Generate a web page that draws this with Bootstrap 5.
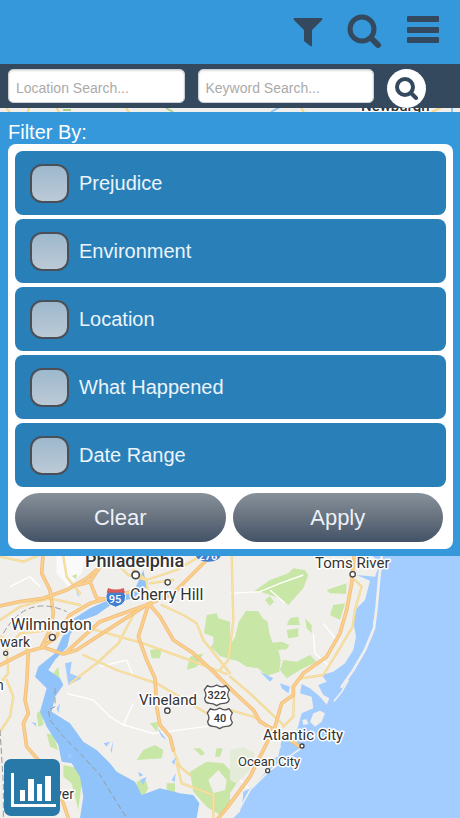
<!DOCTYPE html>
<html lang="en">
<head>
<meta charset="utf-8">
<meta name="viewport" content="width=device-width, initial-scale=1">
<title>Map filters</title>
<link href="https://cdn.jsdelivr.net/npm/bootstrap@5.3.0/dist/css/bootstrap.min.css" rel="stylesheet">
<style>
body { font-family: "Liberation Sans", Arial, sans-serif; background: #f1efec; }
.map-page { overflow: hidden; }
.map-canvas { z-index: 0; }
.map-canvas text { font-family: Roboto, sans-serif; fill: #333; stroke: #fff; stroke-width: 3px; paint-order: stroke; stroke-linejoin: round; }
.map-canvas .shield-text { stroke: none; font-weight: 500; }
.map-canvas .shield-light { fill: #fff; }
.layer { z-index: 1; }
.top-bar { background: #3498db; height: 64px; gap: 24px; padding: 0 21px; }
.icon-btn { color: #34495e; line-height: 0; }
.search-bar { background: #34495e; height: 44px; padding: 0 34px 0 8px; }
.search-bar .form-control { height: 34px; font-size: 14px; padding: 3px 7px 0; border: 1px solid #ccd0d4; border-radius: 5px; box-shadow: inset 0 1px 2px #ddd; margin-right: 13px; min-width: 0; }
.search-bar .form-control::placeholder { color: #aaa; }
.go-btn { width: 39px; height: 39px; background: #fff; color: #34495e; line-height: 0; margin-top: 4px; flex: none; }
.filter-panel { background: #3498db; margin-top: 4px; padding: 8px 7px 7px 8px; }
.filter-title { font-size: 20px; line-height: 24px; color: #fff; }
.filter-box { border-radius: 8px; padding: 7px; }
.filter-list { gap: 4px; }
.filter-item { height: 64px; border-radius: 8px; background: #2980b9; color: #ecf4fa; font-size: 20px; gap: 10px; padding: 0 15px; cursor: pointer; }
.filter-item .form-check-input { width: 39px; height: 39px; margin: 0; border: 2px solid #4b4f57; border-radius: 12px; background: linear-gradient(#a9c1d4, #becbd6); flex: none; }
.filter-item .form-check-input { background: linear-gradient(#9db8cd, #bccad6); }
.filter-item .form-check-input:checked { background: linear-gradient(#5d7388, #34495e); }
.filter-actions { gap: 7px; margin: 6px 3px 0 0; }
.filter-actions .btn { height: 49px; border: 0; font-size: 22px; color: #ecf0f8; background: linear-gradient(#87919a, #68727f 50%, #435268); }
.chart-btn { left: 4px; bottom: 2px; width: 56px; height: 57px; border-radius: 7px; background: #2878a8; line-height: 0; z-index: 2; }
</style>
</head>
<body>
<main class="map-page position-relative min-vh-100">
<svg class="map-canvas position-absolute top-0 start-0 w-100 h-100" viewBox="0 0 460 818" preserveAspectRatio="xMinYMax slice" role="img" aria-label="Map of southern New Jersey">
  <defs>
    <g id="highways" fill="none" stroke-linejoin="round" stroke-linecap="round">
      <path d="M130 0L125 70L150 120L160 190L150 240L125 290"/>
      <path d="M-10 170L60 155L130 145L200 120L260 85L290 60"/>
      <path d="M235 105L270 95L290 145L350 150M270 95L300 50"/>
      <path d="M620 30L560 90L520 130L440 165L330 235L230 300L190 312L130 292L80 305L0 345"/>
      <path d="M125 290L165 265L210 195L270 160L340 140L410 120"/>
      <path d="M440 165L370 190L300 215L250 260L195 310"/>
      <path d="M85 305L80 400L75 450L85 490L70 520L80 590L115 630L165 700L190 760L205 804"/>
      <path d="M445 165L415 260L440 330L465 385L470 470L480 525L510 560L520 600"/>
      <path d="M450 165L480 200L520 270L580 310L640 365L700 425L760 480L780 515L840 550L900 590"/>
      <path d="M1062 20L1055 100L1040 180L1020 250L980 320L910 370L880 410L880 435L845 460L825 530L785 610L750 680L680 775L655 804"/>
    </g>
    <g id="roads" fill="none" stroke-linejoin="round" stroke-linecap="round">
      <path d="M0 210L60 170L150 145L240 165M0 20L70 35L130 10M190 20L200 80L240 130"/>
      <path d="M150 240L60 250L20 300L25 370L0 400M0 260L60 285L85 300"/>
      <path d="M390 20L400 60L440 90L445 165M350 40L385 75L440 90L530 60L590 25M450 100L520 90"/>
      <path d="M485 165L550 195L590 220L610 270L690 370M270 235L430 280L540 320L680 372"/>
      <path d="M400 195L355 280L290 340L210 400M250 315L350 360L470 400L620 490L690 510"/>
      <path d="M695 20L700 210L685 330L660 360M690 380L750 430L850 525M690 480L760 500L785 515"/>
      <path d="M1065 90L1085 110L1065 180L1058 230L1010 310L970 375L905 385M882 435L880 500L850 530"/>
      <path d="M20 390L40 440L30 500L0 545M530 640L545 700L640 735L640 804M520 600L540 650L570 675"/>
    </g>
  </defs>
  <rect width="460" height="818" fill="#f1efec"/>
  <g fill="none" stroke="#f6d788" stroke-width="2"><path d="M5 106L12 115M27 115L30 104M55 105L60 114M125 106L130 114M300 106L305 114M432 112L444 106"/><path stroke="#8fc4f2" d="M271 112L280 107M452 106V114"/><path stroke="#a9d18a" d="M63 110H71M166 108L173 112"/></g>
  <g transform="translate(0 550) scale(.33333)">
    <path fill="#fafafa" d="M170 0H260L245 70L205 110L170 70z"/>
    <g fill="#c8e6a6">
      <path d="M810 90L865 70L880 55L915 60L925 75L910 115L865 165L840 145L780 125L760 125z"/>
      <path d="M795 150L810 138L822 155L810 168zM980 120L1040 100L1038 132L990 130zM1000 165L1035 160L1020 210L990 195z"/>
      <path d="M690 285L705 262L716 215L738 182L775 184L788 205L803 215L808 250L818 278L845 275L868 285L860 298L835 300L842 330L838 365L800 378L775 355L740 350L712 332L690 328L660 318L632 290L645 275L672 280z"/>
      <path d="M620 195L650 190L655 205L690 215V320L665 310L640 285L640 260L612 250z"/>
      <path d="M870 205L895 200L900 225L860 225zM860 240L895 235L895 260L865 265zM915 205L935 225L935 250L920 235z"/>
      <path d="M450 300L485 295L480 325L455 325zM570 320L610 310L590 350L560 360zM850 330L890 335L930 315L950 335L900 360L860 385L840 360z"/>
      <path d="M410 630L430 600L465 585L490 600L485 625zM410 695L435 685L445 715L430 740L408 730z"/>
      <path fill-rule="evenodd" d="M570 665L620 635L670 640L690 660V760L660 795L620 770L580 725zM625 690L655 660L680 690L675 720L640 730z"/>
      <path d="M580 595L600 595L615 610L605 618zM650 595H668L660 620H645zM450 520L475 515L470 545zM500 700H525V735L500 725z"/>
      <path d="M140 550L160 555L175 600L150 590zM190 645L235 655L245 700L235 780L215 700L190 680zM160 370L175 350L180 395L155 395zM215 78L232 72L228 87zM110 490L125 480L130 525L115 530zM690 690L710 700L690 730z"/>
    </g>
    <path fill="#e4ebd8" d="M690 600L730 590L765 610L750 660L710 700L690 690z"/>
    <path fill="none" stroke="#fff" stroke-width="4" d="M690 130L780 125L840 100L910 75M810 120L855 160M200 430L280 450L330 500L370 525L400 460M370 525L460 550L690 520M940 250L945 310L990 350M970 220L1010 270M30 110L90 80L120 110M300 350L380 330L400 380M720 690L750 720"/>
    <g fill="#a3ccff">
      <path d="M1120 20L1138 45L1125 80L1070 75L1110 92L1095 150L1070 175L1060 215L1068 260L1060 300L1035 340L1000 365L965 375L980 395L955 405L970 435L988 445L980 464L960 440L930 415L905 402L900 430L935 440L940 475L905 490L890 545L900 560L845 570L835 620L805 630L810 650L760 710L730 725L725 770L700 804H1380V0H1120z"/>
      <path fill="#91c3fb" d="M430 60L440 110L400 145L340 160L290 195L235 215L210 255L202 290L165 330L145 360L180 385L190 405L165 440L155 485L210 520L250 575L290 600L330 640L350 665L405 695L425 735L480 715L540 730L580 735L598 760L590 804H240L250 740L240 680L215 640L185 635L175 585L140 530L120 485L130 450L140 415L105 380L115 350L165 310L185 265L215 210L270 175L340 143L400 125L420 85z"/>
      <path d="M195 340L215 335L210 370L245 385L205 405zM170 475L180 460L175 490zM228 120L240 140L232 135zM95 515L108 520L108 530zM310 580L330 575L320 590zM335 610L340 570L332 600zM415 665L430 675L418 680zM470 530L500 570L485 560zM515 635L530 620L522 645zM515 690L527 670L524 695zM205 610L220 620L205 625zM780 365L820 385L810 395zM840 400L870 410L865 430L845 415zM420 690L440 680L430 705z"/>
    </g>
    <g fill="#f1efec">
      <path d="M940 490L960 482L975 490L965 515L945 530L930 515zM907 510L920 508L925 522L910 525zM1118 220L1124 208L1125 230zM820 580L845 590L830 605zM710 755L730 735L720 785L700 804z"/>
      <path fill="none" stroke="#f1efec" stroke-linecap="round" stroke-width="8" d="M1145 20L1138 80L1130 170L1122 235L1095 300L1060 360L1025 410"/>
      <path fill="none" stroke="#f1efec" stroke-width="5" d="M1045 390L1025 425L1002 454M910 590L860 625L805 665L750 720L720 775"/>
    </g>
    <use href="#roads" stroke="#f0d595" stroke-width="7"/><use href="#roads" stroke="#fbe5a4" stroke-width="3"/>
    <use href="#highways" stroke="#f1bd80" stroke-width="11"/><use href="#highways" stroke="#fbd08a" stroke-width="6"/>
    <path fill="none" stroke="#999" stroke-width="3" stroke-dasharray="18 9" d="M10 250Q80 130 200 185M165 415V470L145 480L150 510L190 560L240 610L300 675L340 740L380 804M0 540L10 700L10 804"/>
    <g fill="#fff" stroke="#444" stroke-width="4"><circle cx="407" cy="75" r="11" stroke-width="5"/><circle cx="503" cy="97" r="8"/><circle cx="157" cy="262" r="9"/><circle cx="17" cy="310" r="6"/><circle cx="502" cy="482" r="8"/><circle cx="1058" cy="73" r="8"/><circle cx="906" cy="588" r="6"/><circle cx="803" cy="662" r="6"/></g>
    <path fill="#3f7ed0" stroke="#fff" stroke-width="3" d="M325 118Q347 127 370 118Q392 160 347 172Q302 160 325 118z"/>
    <path fill="#d45b57" d="M324 114Q347 123 371 114L375 128H320z"/>
    <ellipse cx="625" cy="15" rx="37" ry="20" fill="#3f7ed0"/>
    <g fill="#fff" stroke="#555" stroke-width="4" stroke-linejoin="round"><path id="us-shield" d="M622 407Q635 415 650 405Q665 415 678 407L688 420Q678 435 688 448Q685 460 670 460Q660 460 650 467Q640 460 630 460Q615 460 614 445Q622 435 613 420z"/><use href="#us-shield" x="9" y="69"/></g>
  </g>
  <text x="361" y="111" font-size="15" font-weight="500">Newburgh</text>
  <text x="85" y="567" font-size="18" font-weight="500">Philadelphia</text>
  <text x="130" y="600" font-size="16">Cherry Hill</text>
  <text x="11" y="630" font-size="16">Wilmington</text>
  <text x="0" y="647" font-size="14">wark</text>
  <text x="-4" y="690" font-size="14">n</text>
  <text x="139" y="705" font-size="15">Vineland</text>
  <text x="315" y="568" font-size="15">Toms River</text>
  <text x="263" y="740" font-size="15">Atlantic City</text>
  <text x="238" y="766" font-size="13">Ocean City</text>
  <text x="38" y="799" font-size="14">Dover</text>
  <text class="shield-text shield-light" x="115" y="603" font-size="11" text-anchor="middle">95</text>
  <text class="shield-text shield-light" x="208" y="560" font-size="11" text-anchor="middle">276</text>
  <text class="shield-text" x="217" y="699" font-size="11" text-anchor="middle">322</text>
  <text class="shield-text" x="220" y="722" font-size="11" text-anchor="middle">40</text>
</svg>

<header class="top-bar layer position-relative d-flex align-items-center justify-content-end">
  <button class="icon-btn btn p-0 border-0" type="button" aria-label="Filter"><svg width="30" height="30" viewBox="0 0 30 30" fill="currentColor"><path d="M1 1H29Q30 2 29 3L19 13V29Q18 30 16 28L11 24V13L1 3Q0 2 1 1z"/></svg></button>
  <button class="icon-btn btn p-0 border-0" type="button" aria-label="Search"><svg width="35" height="36" viewBox="0 0 35 36" fill="none" stroke="currentColor"><circle cx="15" cy="15" r="12" stroke-width="5"/><path d="M24 24L31 31" stroke-width="6" stroke-linecap="round"/></svg></button>
  <button class="icon-btn btn p-0 border-0" type="button" aria-label="Menu"><svg width="33" height="32" viewBox="0 0 33 32" fill="currentColor"><rect x="1" width="32" height="6" rx="1"/><rect x="1" y="11" width="32" height="6" rx="1"/><rect x="1" y="21" width="32" height="6" rx="1"/></svg></button>
</header>

<form class="search-bar layer position-relative d-flex align-items-center">
  <input class="form-control" type="text" placeholder="Location Search..." aria-label="Location search">
  <input class="form-control" type="text" placeholder="Keyword Search..." aria-label="Keyword search">
  <button class="go-btn btn rounded-circle border-0 p-0" type="button" aria-label="Go"><svg width="23" height="23" viewBox="0 0 23 23" fill="none" stroke="currentColor"><circle cx="10" cy="10" r="8" stroke-width="4"/><path d="M16 16L21 21" stroke-width="4" stroke-linecap="round"/></svg></button>
</form>

<section class="filter-panel layer position-relative">
  <h1 class="filter-title fw-normal mb-0">Filter By:</h1>
  <div class="filter-box bg-white">
    <div class="filter-list d-flex flex-column">
      <label class="filter-item d-flex align-items-center" for="f1"><input class="form-check-input" type="checkbox" id="f1">Prejudice</label>
      <label class="filter-item d-flex align-items-center" for="f2"><input class="form-check-input" type="checkbox" id="f2">Environment</label>
      <label class="filter-item d-flex align-items-center" for="f3"><input class="form-check-input" type="checkbox" id="f3">Location</label>
      <label class="filter-item d-flex align-items-center" for="f4"><input class="form-check-input" type="checkbox" id="f4">What Happened</label>
      <label class="filter-item d-flex align-items-center" for="f5"><input class="form-check-input" type="checkbox" id="f5">Date Range</label>
    </div>
    <div class="filter-actions d-flex">
      <button class="btn rounded-pill flex-fill w-50" type="button">Clear</button>
      <button class="btn rounded-pill flex-fill w-50" type="button">Apply</button>
    </div>
  </div>
</section>

<button class="chart-btn btn position-absolute border-0 p-0" type="button" aria-label="Statistics"><svg width="56" height="57" viewBox="0 0 56 57" fill="#fff"><path d="M7 14H10V45H52V48H7zM16 31H21V42H16zM24 20H30V42H24zM33 25H38V42H33zM41 17H47V42H41z"/></svg></button>
</main>
<script src="https://cdn.jsdelivr.net/npm/bootstrap@5.3.0/dist/js/bootstrap.bundle.min.js"></script>
</body>
</html>
